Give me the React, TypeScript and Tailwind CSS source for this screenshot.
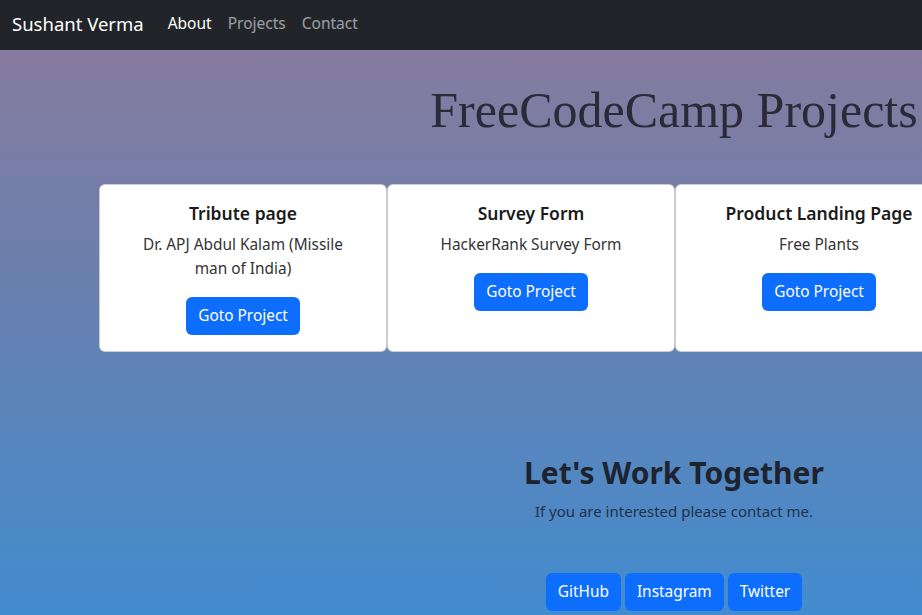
const sans = "font-['Segoe_UI','Noto_Sans','Open_Sans',sans-serif]";

const projects = [
  { title: "Tribute page", desc: ["Dr. APJ Abdul Kalam (Missile", "man of India)"] },
  { title: "Survey Form", desc: ["HackerRank Survey Form"] },
  { title: "Product Landing Page", desc: ["Free Plants"] },
];

const links = ["GitHub", "Instagram", "Twitter"];

export default function App() {
  return (
    <div className={`${sans} min-h-[615px] overflow-hidden bg-[linear-gradient(to_bottom,#8b7a9b_0%,#6b80ae_45%,#428ccf_100%)] text-[#212529]`}>
      <nav className="flex h-[50px] items-center bg-[#212529] px-3 pb-[3px]">
        <span className="mr-4 text-[18.5px] text-white">Sushant Verma</span>
        <a className="px-2 text-[15.5px] text-white">About</a>
        <a className="px-2 text-[15.5px] text-white/55">Projects</a>
        <a className="px-2 text-[15.5px] text-white/55">Contact</a>
      </nav>

      <div className="pl-[426px] text-center">
        <h1 className="mt-[30px] whitespace-nowrap font-['Liberation_Serif',serif] text-[50px] leading-[60px] text-[#2b2a38]">
          FreeCodeCamp Projects
        </h1>
      </div>

      <div className="mt-[44px] ml-[99px] flex w-[900px]">
        {projects.map((p) => (
          <div
            key={p.title}
            className="flex w-[288px] shrink-0 flex-col items-center rounded-md border border-black/20 bg-white p-4 text-center"
          >
            <h5 className="mb-2 text-[17.5px] leading-6 font-semibold whitespace-nowrap text-[#1a1a1a]">{p.title}</h5>
            <p className="mb-4 text-[15.4px] leading-6 text-[#333]">
              {p.desc.map((d, i) => (
                <span key={i} className="block">{d}</span>
              ))}
            </p>
            <button className="h-[38px] rounded-md bg-[#0d6efd] px-3 text-[15.4px] text-white">Goto Project</button>
          </div>
        ))}
      </div>

      <div className="mt-[100px] flex flex-col items-center pl-[426px]">
        <h2 className="text-[30px] leading-[42px] font-bold text-[#1e2330]">Let's Work Together</h2>
        <p className="mt-[5px] text-[15px] leading-6 text-[#243047]">If you are interested please contact me.</p>
        <div className="mt-[50px] flex gap-1">
          {links.map((l) => (
            <button key={l} className="h-[38px] rounded-md bg-[#0d6efd] px-3 text-[15.4px] text-white">{l}</button>
          ))}
        </div>
      </div>
    </div>
  );
}
